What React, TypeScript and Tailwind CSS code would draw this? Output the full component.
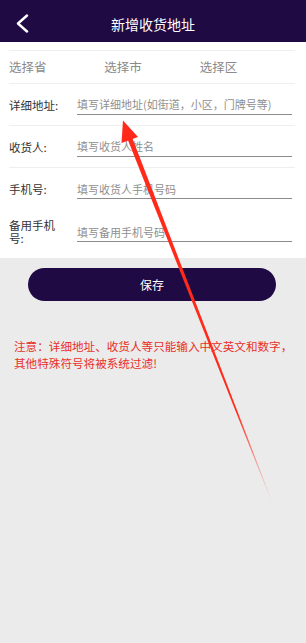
import React from "react";

const font = { fontFamily: '"Noto Sans CJK SC", "Noto Sans", sans-serif' };

function Row({ label, placeholder, border, h, twoLine }: { label: string; placeholder: string; border?: boolean; h: string; twoLine?: boolean }) {
  return (
    <div className={`flex items-center ${h} ${border ? "border-b border-[#eeeeee]" : ""}`}>
      <div className={`w-[52px] shrink-0 text-[11.5px] text-[#333333] ${twoLine ? "leading-[13px]" : "leading-[16px]"}`}>{label}</div>
      <div className="ml-[16px] mr-[3px] flex-1">
        <input
          className="block h-[20px] w-full border-b border-[#8c8c8c] bg-transparent text-[11px] text-[#333] outline-none placeholder:text-[#8f8f8f]"
          placeholder={placeholder}
        />
      </div>
    </div>
  );
}

export default function App() {
  return (
    <div className="relative min-h-[643px] w-full overflow-hidden bg-[#ebebeb]" style={font}>
      <div className="grid h-[42px] grid-cols-[44px_1fr_44px] items-center bg-[#1f0a44] pt-[6px]">
        <div className="flex pl-[16px]">
          <svg width="13" height="20" viewBox="0 0 13 20" fill="none">
            <polyline points="11,1.5 2,9.5 11,17.5" stroke="#ffffff" strokeWidth="2.4" strokeLinecap="round" strokeLinejoin="round" />
          </svg>
        </div>
        <div className="text-center text-[14px] leading-[18px] text-white">新增收货地址</div>
        <div />
      </div>

      <div className="bg-white pl-[9px] pr-[11px] pt-[8px] pb-[4px]">
        <div className="grid h-[34px] grid-cols-3 items-center border-y border-[#eeeeee] text-[12.5px] text-[#8a8a8a]">
          <div>选择省</div>
          <div>选择市</div>
          <div>选择区</div>
        </div>
        <Row label="详细地址:" placeholder="填写详细地址(如街道，小区，门牌号等)" border h="h-[42px]" />
        <Row label="收货人:" placeholder="填写收货人姓名" border h="h-[42px]" />
        <Row label="手机号:" placeholder="填写收货人手机号码" h="h-[42px]" />
        <Row label="备用手机号:" placeholder="填写备用手机号码" h="h-[44px]" twoLine />
      </div>

      <div className="ml-[28px] mr-[30px] mt-[10px] flex h-[33px] items-center justify-center rounded-full bg-[#1f0a44] text-[12px] text-white">
        保存
      </div>

      <div className="mt-[37px] pl-[14px] pr-[12px] text-[11.6px] leading-[17px] text-[#e8302a]">
        注意：详细地址、收货人等只能输入中文英文和数字，其他特殊符号将被系统过滤!
      </div>

      <svg className="pointer-events-none absolute left-0 top-0" width="306" height="643" viewBox="0 0 306 643">
        <defs>
          <linearGradient id="fade" gradientUnits="userSpaceOnUse" x1="130" y1="140" x2="272" y2="502">
            <stop offset="0" stopColor="#ff2a1a" stopOpacity="1" />
            <stop offset="0.75" stopColor="#ff2a1a" stopOpacity="1" />
            <stop offset="1" stopColor="#ff2a1a" stopOpacity="0" />
          </linearGradient>
        </defs>
        <polygon points="123,120.5 138,137 121.5,143" fill="#ff2a1a" />
        <polygon points="127.5,139 132,137.2 272.3,502 271.7,502" fill="url(#fade)" />
      </svg>
    </div>
  );
}
